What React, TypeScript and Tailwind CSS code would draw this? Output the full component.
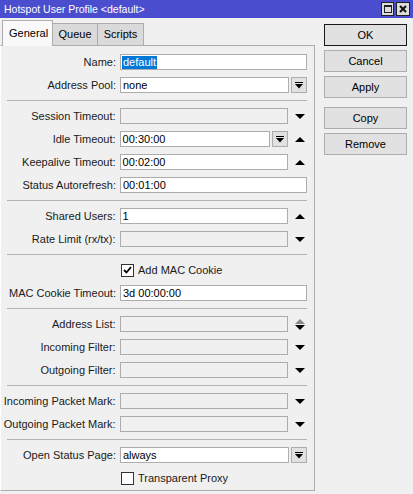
import React from "react";

type Side = "up" | "down" | "updown" | null;

const TriDown = ({ color = "#000" }: { color?: string }) => (
  <svg width="10" height="5" viewBox="0 0 10 5">
    <polygon points="0,0 10,0 5,5" fill={color} />
  </svg>
);

const TriUp = ({ color = "#000" }: { color?: string }) => (
  <svg width="10" height="5" viewBox="0 0 10 5">
    <polygon points="0,5 10,5 5,0" fill={color} />
  </svg>
);

const SideArrow = ({ side }: { side: Side }) => (
  <div className="flex h-[16px] w-[26px] flex-col items-start justify-center pl-[7px]">
    {side === "down" && <TriDown />}
    {side === "up" && <TriUp />}
    {side === "updown" && (
      <>
        <TriUp color="#8a8a8a" />
        <div className="h-[1px]" />
        <TriDown />
      </>
    )}
  </div>
);

const DropButton = () => (
  <div className="ml-[2px] flex h-[16px] w-[16px] items-center justify-center border border-[#adadad] bg-[#e1e1e1]">
    <svg width="8" height="7" viewBox="0 0 8 7">
      <rect x="0" y="0" width="8" height="1" fill="#000" />
      <polygon points="0,2 8,2 4,6.5" fill="#000" />
    </svg>
  </div>
);

const Box: React.FC<{
  value?: string;
  disabled?: boolean;
  selected?: boolean;
  w: string;
}> = ({ value = "", disabled, selected, w }) => (
  <div
    className={`flex h-[16px] items-center overflow-hidden whitespace-nowrap border border-[#adadad] pl-[1px] text-[11px] leading-none text-black ${w} ${
      disabled ? "bg-[#f0f0f0]" : "bg-white"
    }`}
  >
    {selected ? (
      <span className="flex h-[13px] items-center bg-[#0078d7] px-[1px] text-white">
        {value}
      </span>
    ) : (
      <span className="pl-[1px]">{value}</span>
    )}
  </div>
);

type Field = {
  label: string;
  value?: string;
  kind: "full" | "drop" | "arrow" | "droparrow";
  disabled?: boolean;
  selected?: boolean;
  side?: Side;
};

const Row: React.FC<{ f: Field }> = ({ f }) => (
  <div className="flex h-[16px] items-center">
    <div className="w-[119px] whitespace-nowrap pr-[4px] text-right text-[11px] leading-none text-[#1a1a1a]">
      {f.label}:
    </div>
    {f.kind === "full" && (
      <Box w="w-[187px]" value={f.value} selected={f.selected} />
    )}
    {f.kind === "drop" && (
      <>
        <Box w="w-[169px]" value={f.value} />
        <DropButton />
      </>
    )}
    {f.kind === "arrow" && (
      <>
        <Box w="w-[169px]" value={f.value} disabled={f.disabled} />
        <SideArrow side={f.side ?? null} />
      </>
    )}
    {f.kind === "droparrow" && (
      <>
        <Box w="w-[151px]" value={f.value} />
        <DropButton />
        <SideArrow side={f.side ?? null} />
      </>
    )}
  </div>
);

const Check: React.FC<{ label: string; checked?: boolean }> = ({
  label,
  checked,
}) => (
  <div className="flex h-[16px] items-center">
    <div className="w-[120px]" />
    <div className="flex h-[13px] w-[13px] items-center justify-center border border-[#333] bg-white">
      {checked && (
        <svg width="9" height="8" viewBox="0 0 9 8">
          <polyline
            points="1,4 3.5,6.5 8,1"
            fill="none"
            stroke="#000"
            strokeWidth="1.8"
          />
        </svg>
      )}
    </div>
    <span className="ml-[4px] whitespace-nowrap text-[11px] leading-none text-[#1a1a1a]">
      {label}
    </span>
  </div>
);

const Sep = () => <div className="ml-[6px] h-[1px] w-[300px] bg-[#b4b4b4]" />;

const Btn: React.FC<{ label: string; primary?: boolean }> = ({
  label,
  primary,
}) => (
  <div
    className={`flex h-[22px] w-[83px] items-center justify-center bg-[#e1e1e1] text-[11px] leading-none text-black ${
      primary ? "border border-[#1a1a1a]" : "border border-[#adadad]"
    }`}
  >
    {label}
  </div>
);

export default function App() {
  return (
    <div className="flex h-[494px] w-[413px] flex-col overflow-hidden bg-[#f0f0f0] font-['Liberation_Sans',Arial,sans-serif]">
      {/* title bar */}
      <div className="flex h-[18px] items-center bg-[#4b4dcf] pl-[4px] pr-[3px]">
        <span className="whitespace-nowrap text-[10.5px] leading-none text-white">
          Hotspot User Profile &lt;default&gt;
        </span>
        <div className="ml-auto flex gap-[2px]">
          <div className="flex h-[14px] w-[13px] items-center justify-center border border-[#222] bg-[#dcdcdc]">
            <div className="h-[8px] w-[8px] border border-t-2 border-[#222]" />
          </div>
          <div className="flex h-[14px] w-[14px] items-center justify-center border border-[#222] bg-[#dcdcdc]">
            <svg width="8" height="8" viewBox="0 0 8 8">
              <path d="M1 1 L7 7 M7 1 L1 7" stroke="#111" strokeWidth="2" />
            </svg>
          </div>
        </div>
      </div>

      <div className="flex">
        {/* left */}
        <div className="flex w-[315px] flex-col">
          <div className="mt-[2px] flex h-[25px] items-end pl-[2px]">
            <div className="relative z-10 -mb-[1px] flex h-[26px] w-[51px] items-center border border-b-0 border-[#adadad] bg-[#f9f9f9] pl-[6px] text-[11px] leading-none text-black">
              General
            </div>
            <div className="flex h-[22px] w-[45px] items-center justify-center border border-b-0 border-l-0 border-[#adadad] bg-[#dadada] text-[11px] leading-none text-black">
              Queue
            </div>
            <div className="flex h-[22px] w-[46px] items-center justify-center border border-b-0 border-l-0 border-[#adadad] bg-[#dadada] text-[11px] leading-none text-black">
              Scripts
            </div>
          </div>
          <div className="flex h-[446px] flex-col gap-[7px] border border-[#adadad] border-l-white pt-[8px]">
            <Row f={{ label: "Name", value: "default", kind: "full", selected: true }} />
            <Row f={{ label: "Address Pool", value: "none", kind: "drop" }} />
            <Sep />
            <Row f={{ label: "Session Timeout", kind: "arrow", disabled: true, side: "down" }} />
            <Row f={{ label: "Idle Timeout", value: "00:30:00", kind: "droparrow", side: "up" }} />
            <Row f={{ label: "Keepalive Timeout", value: "00:02:00", kind: "arrow", side: "up" }} />
            <Row f={{ label: "Status Autorefresh", value: "00:01:00", kind: "full" }} />
            <Sep />
            <Row f={{ label: "Shared Users", value: "1", kind: "arrow", side: "up" }} />
            <Row f={{ label: "Rate Limit (rx/tx)", kind: "arrow", disabled: true, side: "down" }} />
            <Sep />
            <Check label="Add MAC Cookie" checked />
            <Row f={{ label: "MAC Cookie Timeout", value: "3d 00:00:00", kind: "full" }} />
            <Sep />
            <Row f={{ label: "Address List", kind: "arrow", disabled: true, side: "updown" }} />
            <Row f={{ label: "Incoming Filter", kind: "arrow", disabled: true, side: "down" }} />
            <Row f={{ label: "Outgoing Filter", kind: "arrow", disabled: true, side: "down" }} />
            <Sep />
            <Row f={{ label: "Incoming Packet Mark", kind: "arrow", disabled: true, side: "down" }} />
            <Row f={{ label: "Outgoing Packet Mark", kind: "arrow", disabled: true, side: "down" }} />
            <Sep />
            <Row f={{ label: "Open Status Page", value: "always", kind: "drop" }} />
            <Check label="Transparent Proxy" />
          </div>
        </div>

        {/* right buttons */}
        <div className="ml-[9px] mt-[6px] flex flex-col gap-[4px]">
          <Btn label="OK" primary />
          <Btn label="Cancel" />
          <Btn label="Apply" />
          <div className="h-[1px]" />
          <Btn label="Copy" />
          <Btn label="Remove" />
        </div>
      </div>
    </div>
  );
}
